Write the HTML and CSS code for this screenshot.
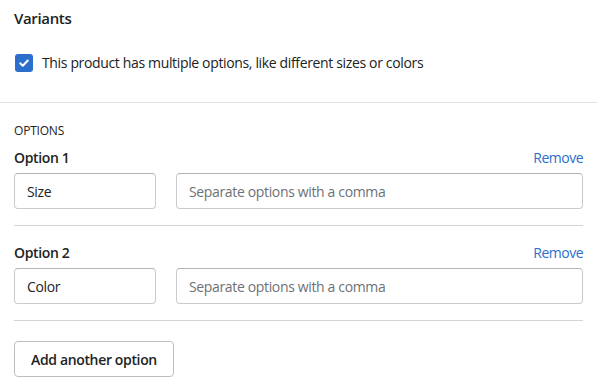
FILE: index.html
```html
<!DOCTYPE html>
<html lang="en">
<head>
<meta charset="utf-8">
<title>Variants</title>
<link rel="stylesheet" href="styles.css">
</head>
<body>
<div class="card">
  <section class="card-head">
    <h2 class="title">Variants</h2>
    <label class="check-row">
      <span class="checkbox">
        <svg viewBox="0 0 18 18" width="18" height="18" aria-hidden="true">
          <path d="M5.2 9.3l2.6 2.5 5-5.3" fill="none" stroke="#fff" stroke-width="2" stroke-linecap="round" stroke-linejoin="round"/>
        </svg>
      </span>
      <span class="check-label">This product has multiple options, like different sizes or colors</span>
    </label>
  </section>
  <section class="card-options">
    <div class="subheading">OPTIONS</div>
    <div class="option">
      <div class="option-head">
        <span class="option-name">Option 1</span>
        <a class="link" href="#">Remove</a>
      </div>
      <div class="option-fields">
        <input class="field" type="text" value="Size">
        <input class="field" type="text" placeholder="Separate options with a comma">
      </div>
    </div>
    <div class="option">
      <div class="option-head">
        <span class="option-name">Option 2</span>
        <a class="link" href="#">Remove</a>
      </div>
      <div class="option-fields">
        <input class="field" type="text" value="Color">
        <input class="field" type="text" placeholder="Separate options with a comma">
      </div>
    </div>
    <div class="actions">
      <button class="btn" type="button">Add another option</button>
    </div>
  </section>
</div>
</body>
</html>
```

FILE: styles.css
```css
* { box-sizing: border-box; }
html, body { margin: 0; padding: 0; background: #fff; }
body {
  font-family: "Open Sans", "Noto Sans", "Liberation Sans", sans-serif;
  color: #202223;
  font-size: 14px;
  letter-spacing: -0.35px;
}
.card { width: 597px; }
.card-head {
  padding: 8px 14px 29px;
  border-bottom: 1px solid #e1e3e5;
}
.title {
  margin: 0;
  font-size: 15px;
  line-height: 20px;
  font-weight: 600;
}
.check-row {
  margin-top: 25px;
  display: flex;
  align-items: center;
  height: 20px;
  gap: 9px;
}
.checkbox {
  width: 18px;
  height: 18px;
  margin-left: 1px;
  border-radius: 3px;
  background: #2c6ecb;
  display: flex;
}
.check-label { font-size: 14px; line-height: 20px; }
.card-options { padding: 20px 14px 8px; }
.subheading {
  font-size: 12px;
  line-height: 16px;
  font-weight: 500;
  letter-spacing: -0.2px;
}
.option {
  padding-top: 8px;
  padding-bottom: 16px;
  border-bottom: 1px solid #d2d5d8;
}
.option + .option { padding-top: 16px; }
.option-head {
  display: flex;
  justify-content: space-between;
  align-items: center;
  height: 20px;
  margin-bottom: 6px;
}
.option-name { font-weight: 600; font-size: 14px; }
.link { color: #2c6ecb; text-decoration: none; font-size: 14px; letter-spacing: -0.5px; }
.option-fields {
  display: grid;
  grid-template-columns: 142px 1fr;
  gap: 20px;
}
.field {
  height: 36px;
  border: 1px solid #c9cccf;
  border-top-color: #aeb4b9;
  border-radius: 4px;
  padding: 0 12px;
  font: inherit;
  font-size: 14px;
  letter-spacing: -0.35px;
  color: #202223;
  background: #fff;
  width: 100%;
}
.field::placeholder { color: #6d7175; }
.actions { padding-top: 20px; }
.btn {
  height: 36px;
  padding: 0 16px;
  border: 1px solid #babfc3;
  border-radius: 4px;
  background: #fff;
  font: inherit;
  font-weight: 600;
  font-size: 14px;
  letter-spacing: -0.35px;
  color: #202223;
}
```
